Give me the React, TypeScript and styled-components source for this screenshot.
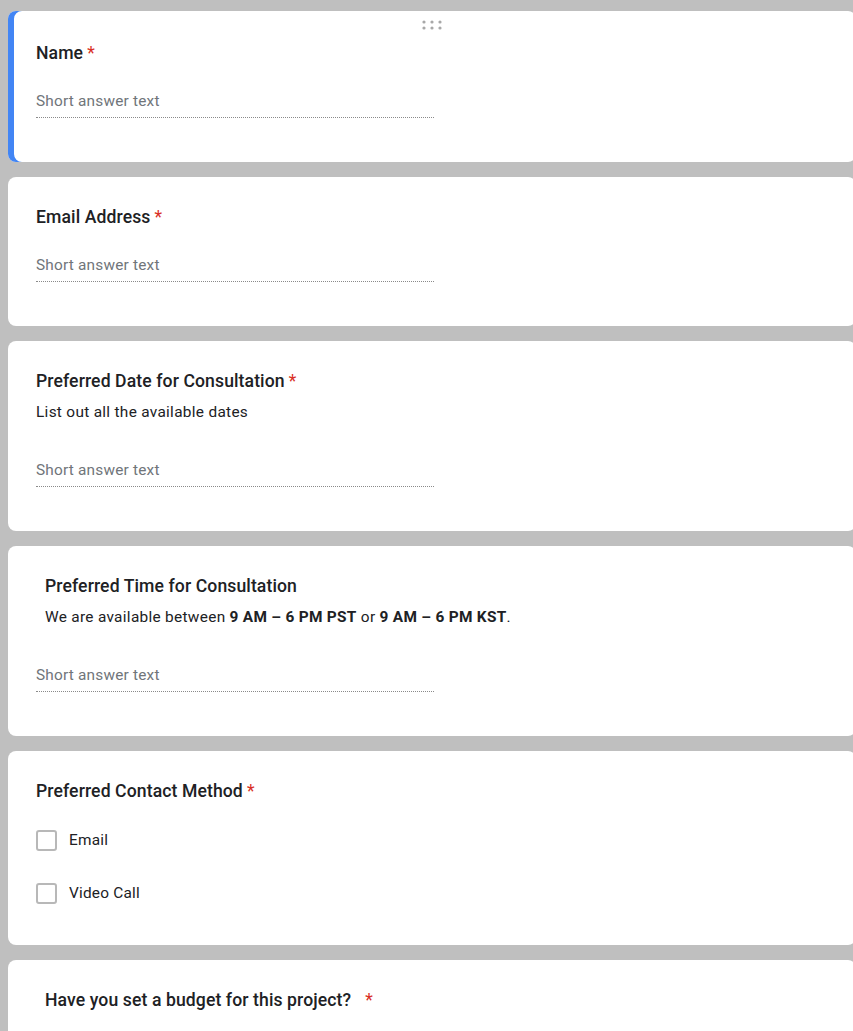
import React from "react";
import styled, { createGlobalStyle } from "styled-components";

const GlobalStyle = createGlobalStyle`
  html, body {
    margin: 0;
    padding: 0;
    background: #bfbfbf;
    overflow: hidden;
  }
  body {
    font-family: Roboto, "Noto Sans", Arial, sans-serif;
    color: #202124;
  }
`;

const Page = styled.div`
  display: flex;
  flex-direction: column;
  gap: 15px;
  padding: 11px 0 0 8px;
  width: 848px;
`;

const Card = styled.section<{ $active?: boolean }>`
  display: flex;
  flex-direction: column;
  background: #fff;
  border-radius: 8px;
  padding: 0 24px 44px 28px;
  box-shadow: ${(p) => (p.$active ? "inset 6px 0 0 #4285f4" : "none")};
`;

const HandleRow = styled.div<{ $active?: boolean }>`
  height: ${(p) => (p.$active ? "26px" : "24px")};
  box-sizing: border-box;
  padding-top: 9px;
  display: flex;
  justify-content: center;
  align-items: flex-start;
  margin-left: -4px;
`;

const Dots = styled.svg`
  display: block;
`;

const Header = styled.div<{ $indent?: boolean }>`
  display: flex;
  flex-direction: column;
  padding-top: 3px;
  padding-left: ${(p) => (p.$indent ? "9px" : "0")};
`;

const Title = styled.div`
  font-size: 17.6px;
  font-weight: 500;
  line-height: 26px;
  letter-spacing: 0.1px;
  color: #202124;
`;

const Required = styled.span<{ $wide?: boolean }>`
  color: #d93025;
  margin-left: ${(p) => (p.$wide ? "14px" : "4px")};
  font-weight: 400;
`;

const Description = styled.div`
  margin-top: 7px;
  margin-bottom: 12px;
  font-size: 15.4px;
  line-height: 22px;
  letter-spacing: 0.3px;
  color: #202124;
  b {
    font-weight: 700;
  }
`;

const AnswerLine = styled.div`
  margin-top: 24px;
  width: 50%;
  padding-bottom: 5px;
  border-bottom: 1px dotted #8a8a8a;
  font-size: 15.4px;
  line-height: 22px;
  letter-spacing: 0.2px;
  color: #70757a;
`;

const Options = styled.div`
  margin: 25px 0 -3px;
  display: flex;
  flex-direction: column;
  gap: 31px;
`;

const Option = styled.label`
  display: flex;
  align-items: center;
  gap: 12px;
  font-size: 15.4px;
  line-height: 22px;
  letter-spacing: 0.2px;
  color: #202124;
`;

const Box = styled.span`
  width: 17px;
  height: 17px;
  border: 2px solid #b8b8b8;
  border-radius: 3px;
  flex: none;
`;

const DragHandle = () => (
  <Dots width="20" height="10" viewBox="0 0 20 10">
    {[2, 10, 18].map((x) =>
      [2, 8].map((y) => <circle key={`${x}-${y}`} cx={x} cy={y} r="1.6" fill="#a8a8a8" />)
    )}
  </Dots>
);

type Question = {
  title: string;
  required?: boolean;
  wideStar?: boolean;
  indent?: boolean;
  description?: React.ReactNode;
  options?: string[];
  noAnswer?: boolean;
  active?: boolean;
};

const questions: Question[] = [
  { title: "Name", required: true, active: true },
  { title: "Email Address", required: true },
  {
    title: "Preferred Date for Consultation",
    required: true,
    description: "List out all the available dates",
  },
  {
    title: "Preferred Time for Consultation",
    indent: true,
    description: (
      <>
        We are available between <b>9 AM – 6 PM PST</b> or <b>9 AM – 6 PM KST</b>.
      </>
    ),
  },
  {
    title: "Preferred Contact Method",
    required: true,
    options: ["Email", "Video Call"],
  },
  {
    title: "Have you set a budget for this project?",
    required: true,
    wideStar: true,
    indent: true,
    noAnswer: true,
  },
];

export default function App() {
  return (
    <>
      <GlobalStyle />
      <Page>
        {questions.map((q) => (
          <Card key={q.title} $active={q.active}>
            <HandleRow $active={q.active}>{q.active && <DragHandle />}</HandleRow>
            <Header $indent={q.indent}>
              <Title>
                {q.title}
                {q.required && <Required $wide={q.wideStar}>*</Required>}
              </Title>
              {q.description && <Description>{q.description}</Description>}
            </Header>
            {q.options ? (
              <Options>
                {q.options.map((o) => (
                  <Option key={o}>
                    <Box />
                    {o}
                  </Option>
                ))}
              </Options>
            ) : (
              !q.noAnswer && <AnswerLine>Short answer text</AnswerLine>
            )}
          </Card>
        ))}
      </Page>
    </>
  );
}
